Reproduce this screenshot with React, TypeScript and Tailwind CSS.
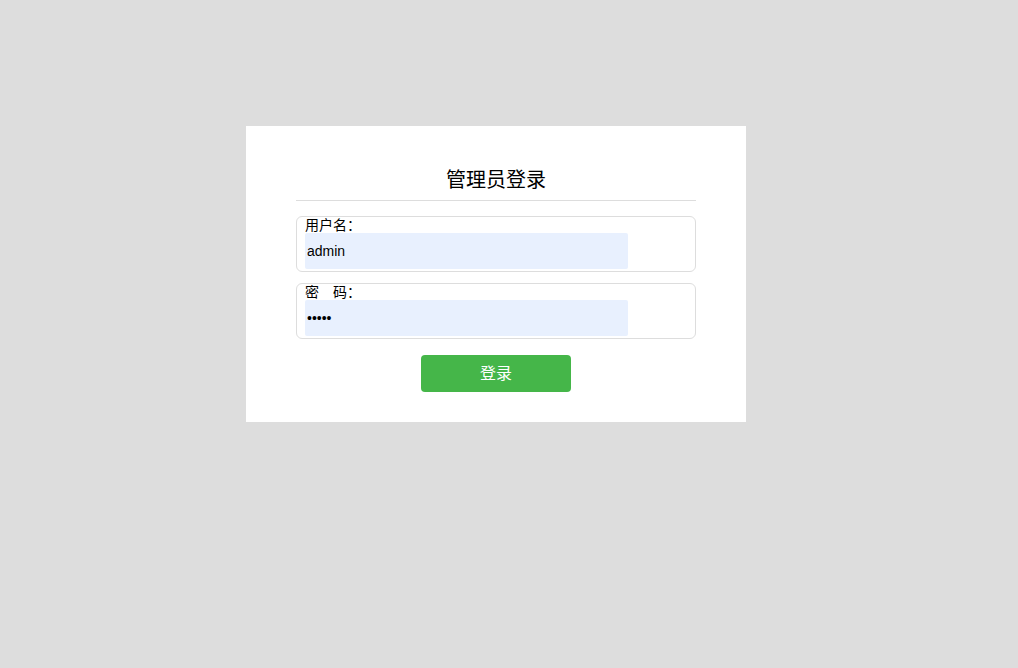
import React from "react";

export default function App() {
  const font = { fontFamily: '"Liberation Sans", "Noto Sans CJK SC", sans-serif' };
  return (
    <div className="w-[1018px] h-[668px] bg-[#dddddd] pt-[126px]" style={font}>
      <div className="ml-[246px] w-[500px] bg-white px-[50px] pt-[40px] pb-[30px]">
        <div className="border-b border-[#dddddd] pb-[6px] text-center text-[20px] leading-[28px] text-black">
          管理员登录
        </div>
        <div className="mt-[15px] flex flex-col gap-[11px]">
          <div className="h-[56px] rounded-[6px] border border-[#dddddd] pl-[8px]">
            <div className="text-[14px] leading-[16px] text-black">用户名：</div>
            <input
              readOnly
              value="admin"
              className="block h-[36px] w-[323px] rounded-[2px] bg-[#e8f0fe] px-[2px] text-[14px] text-black outline-none"
              style={font}
            />
          </div>
          <div className="h-[56px] rounded-[6px] border border-[#dddddd] pl-[8px]">
            <div className="text-[14px] leading-[16px] text-black whitespace-pre">密　码：</div>
            <input
              readOnly
              type="password"
              value="admin"
              className="block h-[36px] w-[323px] rounded-[2px] bg-[#e8f0fe] px-[2px] text-[14px] text-black outline-none"
              style={font}
            />
          </div>
        </div>
        <div className="mt-[16px] flex justify-center">
          <button className="h-[37px] w-[150px] rounded-[4px] bg-[#45b649] text-[16px] text-white" style={font}>
            登录
          </button>
        </div>
      </div>
    </div>
  );
}
